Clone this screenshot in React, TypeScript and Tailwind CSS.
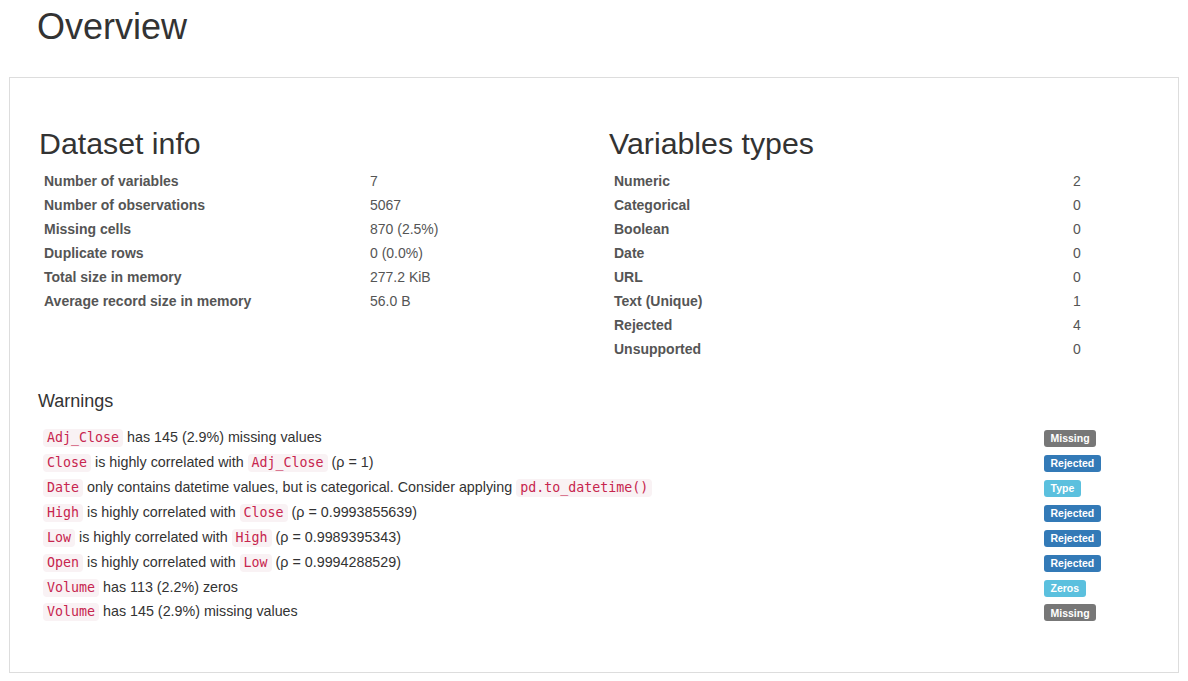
import React from "react";

const datasetInfo: [string, string][] = [
  ["Number of variables", "7"],
  ["Number of observations", "5067"],
  ["Missing cells", "870 (2.5%)"],
  ["Duplicate rows", "0 (0.0%)"],
  ["Total size in memory", "277.2 KiB"],
  ["Average record size in memory", "56.0 B"],
];

const varTypes: [string, string][] = [
  ["Numeric", "2"],
  ["Categorical", "0"],
  ["Boolean", "0"],
  ["Date", "0"],
  ["URL", "0"],
  ["Text (Unique)", "1"],
  ["Rejected", "4"],
  ["Unsupported", "0"],
];

type Part = { c?: string; t?: string };
type Warn = { parts: Part[]; badge: "Missing" | "Rejected" | "Type" | "Zeros" };

const warnings: Warn[] = [
  { parts: [{ c: "Adj_Close" }, { t: " has 145 (2.9%) missing values" }], badge: "Missing" },
  { parts: [{ c: "Close" }, { t: " is highly correlated with " }, { c: "Adj_Close" }, { t: " (ρ = 1)" }], badge: "Rejected" },
  {
    parts: [
      { c: "Date" },
      { t: " only contains datetime values, but is categorical. Consider applying " },
      { c: "pd.to_datetime()" },
    ],
    badge: "Type",
  },
  { parts: [{ c: "High" }, { t: " is highly correlated with " }, { c: "Close" }, { t: " (ρ = 0.9993855639)" }], badge: "Rejected" },
  { parts: [{ c: "Low" }, { t: " is highly correlated with " }, { c: "High" }, { t: " (ρ = 0.9989395343)" }], badge: "Rejected" },
  { parts: [{ c: "Open" }, { t: " is highly correlated with " }, { c: "Low" }, { t: " (ρ = 0.9994288529)" }], badge: "Rejected" },
  { parts: [{ c: "Volume" }, { t: " has 113 (2.2%) zeros" }], badge: "Zeros" },
  { parts: [{ c: "Volume" }, { t: " has 145 (2.9%) missing values" }], badge: "Missing" },
];

function Badge({ kind }: { kind: Warn["badge"] }) {
  const bg =
    kind === "Missing" ? "bg-[#777777]" : kind === "Rejected" ? "bg-[#337ab7]" : "bg-[#5bc0de]";
  return (
    <span
      className={`inline-flex h-[17px] items-center rounded-[3px] px-[6.5px] text-[10.5px] font-bold leading-none text-white ${bg}`}
    >
      {kind}
    </span>
  );
}

function Code({ children }: { children: React.ReactNode }) {
  return (
    <code
      className="inline-block h-[18px] rounded-[4px] bg-[#f9f2f4] px-[4px] text-[13.3px] leading-[18px] text-[#c7254e]"
      style={{ fontFamily: '"DejaVu Sans Mono", "Liberation Mono", monospace' }}
    >
      {children}
    </code>
  );
}

function InfoTable({ rows, labelW }: { rows: [string, string][]; labelW: string }) {
  return (
    <div className="flex flex-col">
      {rows.map(([k, v]) => (
        <div key={k} className="flex h-[24px] items-center text-[14px] text-[#555]">
          <div className={`${labelW} shrink-0 px-[5px] font-bold`}>{k}</div>
          <div className="px-[5px]">{v}</div>
        </div>
      ))}
    </div>
  );
}

export default function App() {
  return (
    <div
      className="min-h-[681px] bg-white text-[14px] text-[#333]"
      style={{ fontFamily: '"Liberation Sans", Arial, sans-serif' }}
    >
      <h1 className="ml-[37px] h-[77px] pt-[7px] text-[36px] font-normal leading-[40px] text-[#333]">Overview</h1>
      <div className="mx-[9px] h-[596px] border border-[#dddddd] px-[29px] pt-[49px]">
        <div className="flex">
          <div className="w-[570px] shrink-0">
            <h2 className="mb-[9px] text-[30.3px] font-normal leading-[33px]">Dataset info</h2>
            <InfoTable rows={datasetInfo} labelW="w-[326px]" />
          </div>
          <div className="flex-1">
            <h2 className="mb-[9px] text-[30.3px] font-normal leading-[33px]">Variables types</h2>
            <InfoTable rows={varTypes} labelW="w-[459px]" />
          </div>
        </div>
        <h3 className="-ml-px mt-[30px] text-[18px] font-normal leading-[20px]">Warnings</h3>
        <div className="-ml-px mt-[14.5px] flex flex-col">
          {warnings.map((w, i) => (
            <div key={i} className="flex h-[24.9px] items-center">
              <div className="w-[1001px] shrink-0 whitespace-pre px-[5px] text-[14.3px]">
                {w.parts.map((p, j) =>
                  p.c ? <Code key={j}>{p.c}</Code> : <span key={j}>{p.t}</span>
                )}
              </div>
              <div className="px-[5px]">
                <Badge kind={w.badge} />
              </div>
            </div>
          ))}
        </div>
      </div>
    </div>
  );
}
